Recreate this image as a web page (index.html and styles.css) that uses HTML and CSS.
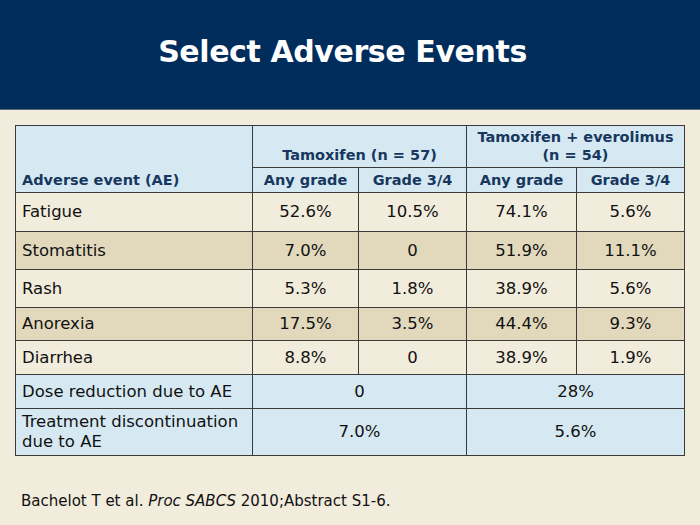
FILE: index.html
```html
<!DOCTYPE html>
<html>
<head>
<meta charset="utf-8">
<link rel="stylesheet" href="styles.css">
</head>
<body>
<header class="banner"><h1 class="title">Select Adverse Events</h1></header>
<main class="content">
<table class="ae">
<colgroup>
<col class="c-event"><col class="c-num"><col class="c-num2"><col class="c-num3"><col class="c-num2">
</colgroup>
<thead>
<tr class="h1">
<th class="ev" rowspan="2">Adverse event (AE)</th>
<th colspan="2" class="grp">Tamoxifen (n = 57)</th>
<th colspan="2" class="grp">Tamoxifen + everolimus<br>(n = 54)</th>
</tr>
<tr class="h2">
<th>Any grade</th><th>Grade 3/4</th><th>Any grade</th><th>Grade 3/4</th>
</tr>
</thead>
<tbody>
<tr class="light r1"><td class="ev">Fatigue</td><td>52.6%</td><td>10.5%</td><td>74.1%</td><td>5.6%</td></tr>
<tr class="dark r2"><td class="ev">Stomatitis</td><td>7.0%</td><td>0</td><td>51.9%</td><td>11.1%</td></tr>
<tr class="light r3"><td class="ev">Rash</td><td>5.3%</td><td>1.8%</td><td>38.9%</td><td>5.6%</td></tr>
<tr class="dark r4"><td class="ev">Anorexia</td><td>17.5%</td><td>3.5%</td><td>44.4%</td><td>9.3%</td></tr>
<tr class="light r5"><td class="ev">Diarrhea</td><td>8.8%</td><td>0</td><td>38.9%</td><td>1.9%</td></tr>
<tr class="blue r6"><td class="ev">Dose reduction due to AE</td><td colspan="2">0</td><td colspan="2">28%</td></tr>
<tr class="blue r7"><td class="ev">Treatment discontinuation due to AE</td><td colspan="2">7.0%</td><td colspan="2">5.6%</td></tr>
</tbody>
</table>
<p class="ref">Bachelot T et al. <em>Proc SABCS</em> 2010;Abstract S1-6.</p>
</main>
</body>
</html>
```
FILE: styles.css
```css
html, body {
  margin: 0;
  padding: 0;
}
body {
  width: 700px;
  height: 525px;
  background: #f1ecdc;
  font-family: "DejaVu Sans", Verdana, sans-serif;
  overflow: hidden;
}
.banner {
  height: 110px;
  background: #002d5c;
  border-bottom: 1px solid #5a6b7a;
  box-sizing: border-box;
  display: flex;
  align-items: center;
  justify-content: center;
}
.title {
  margin: 0 15px 6px 0;
  color: #ffffff;
  font-size: 30px;
  font-weight: bold;
  letter-spacing: -0.4px;
}
.content {
  padding: 15px 0 0 15px;
}
.ae {
  border-collapse: collapse;
  table-layout: fixed;
  width: 669px;
  border: 1px solid #3a3a3a;
}
.c-event { width: 237px; }
.c-num { width: 106px; }
.c-num2 { width: 108px; }
.c-num3 { width: 110px; }
.ae th, .ae td {
  border: 1px solid #3a3a3a;
  padding: 0;
  text-align: center;
  vertical-align: middle;
}
.ae th {
  background: #d6e9f2;
  color: #17375e;
  font-size: 14.5px;
  font-weight: bold;
  line-height: 18px;
}
.ae th.ev {
  text-align: left;
  vertical-align: bottom;
  padding: 0 0 3px 6px;
}
.ae th.grp {
  vertical-align: bottom;
  padding-bottom: 3px;
}
.h1 { height: 42px; }
.h2 { height: 25px; }
.ae td {
  font-size: 16.5px;
  color: #111;
  line-height: 20px;
}
.ae td.ev {
  text-align: left;
  padding-left: 6px;
}
.light td { background: #f1ecdc; }
.dark td { background: #e2d9bd; }
.blue td { background: #d6e9f2; }
.r1 { height: 39px; }
.r2 { height: 38px; }
.r3 { height: 38px; }
.r4 { height: 33px; }
.r5 { height: 34px; }
.r6 { height: 34px; }
.r7 { height: 47px; }
.ref {
  margin: 36px 0 0 6px;
  font-size: 15px;
  color: #111;
}
```
